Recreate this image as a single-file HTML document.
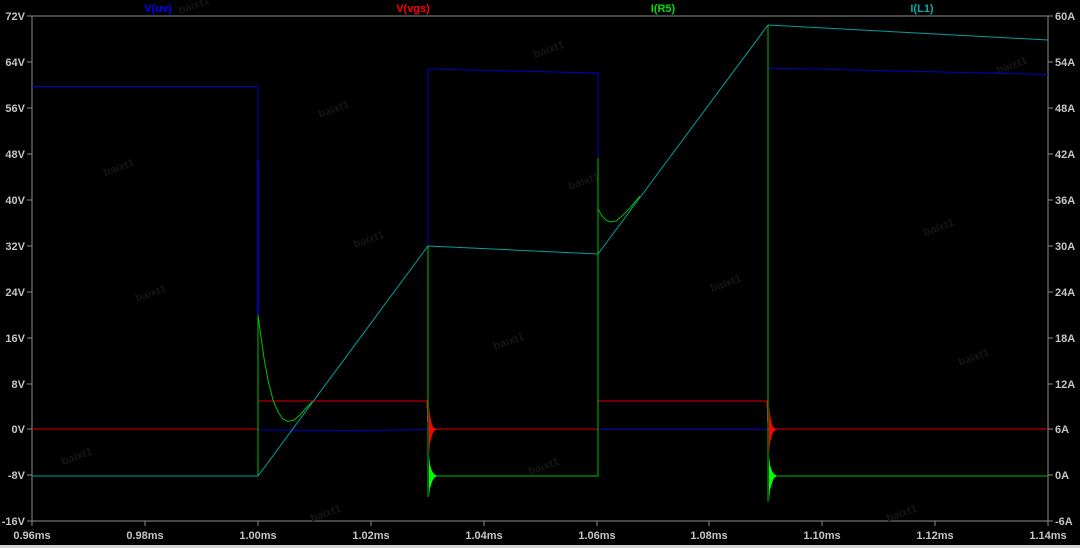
<!DOCTYPE html>
<html><head><meta charset="utf-8"><style>
html,body{margin:0;padding:0;background:#000;}
svg{display:block}
text{font-family:"Liberation Sans",Arial,sans-serif;font-weight:bold;font-size:11px}
</style></head><body>
<svg width="1080" height="548" viewBox="0 0 1080 548" xmlns="http://www.w3.org/2000/svg">
<rect width="1080" height="548" fill="#000"/>
<rect x="0" y="545" width="1080" height="3" fill="#d4d4d4"/>
<rect x="32" y="16" width="1016" height="505" fill="none" stroke="#8c8c8c" stroke-width="1"/>
<g stroke="#8c8c8c" stroke-width="1">
<line x1="27" y1="16" x2="32" y2="16"/><line x1="27" y1="62" x2="32" y2="62"/><line x1="27" y1="108" x2="32" y2="108"/><line x1="27" y1="154" x2="32" y2="154"/><line x1="27" y1="200" x2="32" y2="200"/><line x1="27" y1="246" x2="32" y2="246"/><line x1="27" y1="292" x2="32" y2="292"/><line x1="27" y1="338" x2="32" y2="338"/><line x1="27" y1="384" x2="32" y2="384"/><line x1="27" y1="429" x2="32" y2="429"/><line x1="27" y1="475" x2="32" y2="475"/><line x1="27" y1="521" x2="32" y2="521"/>
<line x1="1048" y1="16" x2="1053" y2="16"/><line x1="1048" y1="62" x2="1053" y2="62"/><line x1="1048" y1="108" x2="1053" y2="108"/><line x1="1048" y1="154" x2="1053" y2="154"/><line x1="1048" y1="200" x2="1053" y2="200"/><line x1="1048" y1="246" x2="1053" y2="246"/><line x1="1048" y1="292" x2="1053" y2="292"/><line x1="1048" y1="338" x2="1053" y2="338"/><line x1="1048" y1="384" x2="1053" y2="384"/><line x1="1048" y1="429" x2="1053" y2="429"/><line x1="1048" y1="475" x2="1053" y2="475"/><line x1="1048" y1="521" x2="1053" y2="521"/>
<line x1="32" y1="521" x2="32" y2="526"/><line x1="145" y1="521" x2="145" y2="526"/><line x1="258" y1="521" x2="258" y2="526"/><line x1="371" y1="521" x2="371" y2="526"/><line x1="484" y1="521" x2="484" y2="526"/><line x1="597" y1="521" x2="597" y2="526"/><line x1="709" y1="521" x2="709" y2="526"/><line x1="822" y1="521" x2="822" y2="526"/><line x1="935" y1="521" x2="935" y2="526"/><line x1="1048" y1="521" x2="1048" y2="526"/>
</g>
<g fill="#c4c4c4" text-anchor="end">
<text x="25" y="20">72V</text><text x="25" y="66">64V</text><text x="25" y="112">56V</text><text x="25" y="158">48V</text><text x="25" y="204">40V</text><text x="25" y="250">32V</text><text x="25" y="296">24V</text><text x="25" y="342">16V</text><text x="25" y="388">8V</text><text x="25" y="433">0V</text><text x="25" y="479">-8V</text><text x="25" y="525">-16V</text>
</g>
<g fill="#c4c4c4">
<text x="1055" y="20">60A</text><text x="1055" y="66">54A</text><text x="1055" y="112">48A</text><text x="1055" y="158">42A</text><text x="1055" y="204">36A</text><text x="1055" y="250">30A</text><text x="1055" y="296">24A</text><text x="1055" y="342">18A</text><text x="1055" y="388">12A</text><text x="1055" y="433">6A</text><text x="1055" y="479">0A</text><text x="1055" y="525">-6A</text>
</g>
<g fill="#c4c4c4" text-anchor="middle">
<text x="32" y="539">0.96ms</text><text x="145" y="539">0.98ms</text><text x="258" y="539">1.00ms</text><text x="371" y="539">1.02ms</text><text x="484" y="539">1.04ms</text><text x="597" y="539">1.06ms</text><text x="709" y="539">1.08ms</text><text x="822" y="539">1.10ms</text><text x="935" y="539">1.12ms</text><text x="1048" y="539">1.14ms</text>
</g>
<g text-anchor="middle">
<text x="158" y="12" fill="#0000ff">V(uv)</text>
<text x="413" y="12" fill="#ff0000">V(vgs)</text>
<text x="663" y="12" fill="#00e000">I(R5)</text>
<text x="922" y="12" fill="#00b0b0">I(L1)</text>
</g>
<g fill="#161616" font-size="10" style="font-weight:normal">
<text transform="translate(180,14) rotate(-20)">baixt1</text>
<text transform="translate(105,176) rotate(-20)">baixt1</text>
<text transform="translate(320,118) rotate(-20)">baixt1</text>
<text transform="translate(137,302) rotate(-20)">baixt1</text>
<text transform="translate(355,248) rotate(-20)">baixt1</text>
<text transform="translate(63,465) rotate(-20)">baixt1</text>
<text transform="translate(535,58) rotate(-20)">baixt1</text>
<text transform="translate(570,190) rotate(-20)">baixt1</text>
<text transform="translate(495,350) rotate(-20)">baixt1</text>
<text transform="translate(530,475) rotate(-20)">baixt1</text>
<text transform="translate(712,292) rotate(-20)">baixt1</text>
<text transform="translate(925,236) rotate(-20)">baixt1</text>
<text transform="translate(998,74) rotate(-20)">baixt1</text>
<text transform="translate(960,366) rotate(-20)">baixt1</text>
<text transform="translate(888,522) rotate(-20)">baixt1</text>
<text transform="translate(312,522) rotate(-20)">baixt1</text>
</g>
<g fill="none" stroke-width="1">
<polyline shape-rendering="crispEdges" stroke="#e00000" points="32,429 258,429 258,401 427,401 428,429 598,429 598,401 767,401 768,429 1048,429"/>
<polyline stroke="#0000c8" points="32,86.5 258,86.5 258,430 360,430.5 428,429.5 428,69 598,73 598,429.5 768,429.5 768,68 1048,74.5"/>
<line x1="258" y1="160" x2="258" y2="315" stroke="#0000ff" stroke-width="1.5"/>
<polyline stroke="#00a0a0" points="32,476 258,476 428,246 598,254 768,25 1048,40"/>
<polyline stroke="#00c000" points="258,476 258,315 260,330 264,358 268,380 273,400 278,412 283,419 288,421.5 294,420 300,415 306,408 312,402"/>
<line x1="428" y1="246" x2="428" y2="497" stroke="#00c000"/>
<polyline stroke="#00c000" points="429,476 598,476 598,158"/>
<polyline stroke="#00c000" points="598,209 602,216 606,220 610,222 616,221 622,216 630,208 640,196"/>
<line x1="768" y1="25" x2="768" y2="502" stroke="#00c000"/>
<polyline stroke="#00c000" points="769,476 1048,476"/>
</g>
<g>
<path d="M429,405 L430,415 L432,425 L434,428 L437,429.5 L434,431 L432,435 L430,443 L429,455 Z" fill="#ff0000"/>
<path d="M429,455 L430,465 L432,471 L434,474 L437,476 L434,478 L432,482 L430,488 L429,497 Z" fill="#00ff00"/>
<path d="M769,405 L770,415 L772,425 L774,428 L777,429.5 L774,431 L772,435 L770,443 L769,455 Z" fill="#ff0000"/>
<path d="M769,455 L770,465 L772,471 L774,474 L777,476 L774,478 L772,483 L770,490 L769,501 Z" fill="#00ff00"/>
</g>
</svg>
</body></html>
